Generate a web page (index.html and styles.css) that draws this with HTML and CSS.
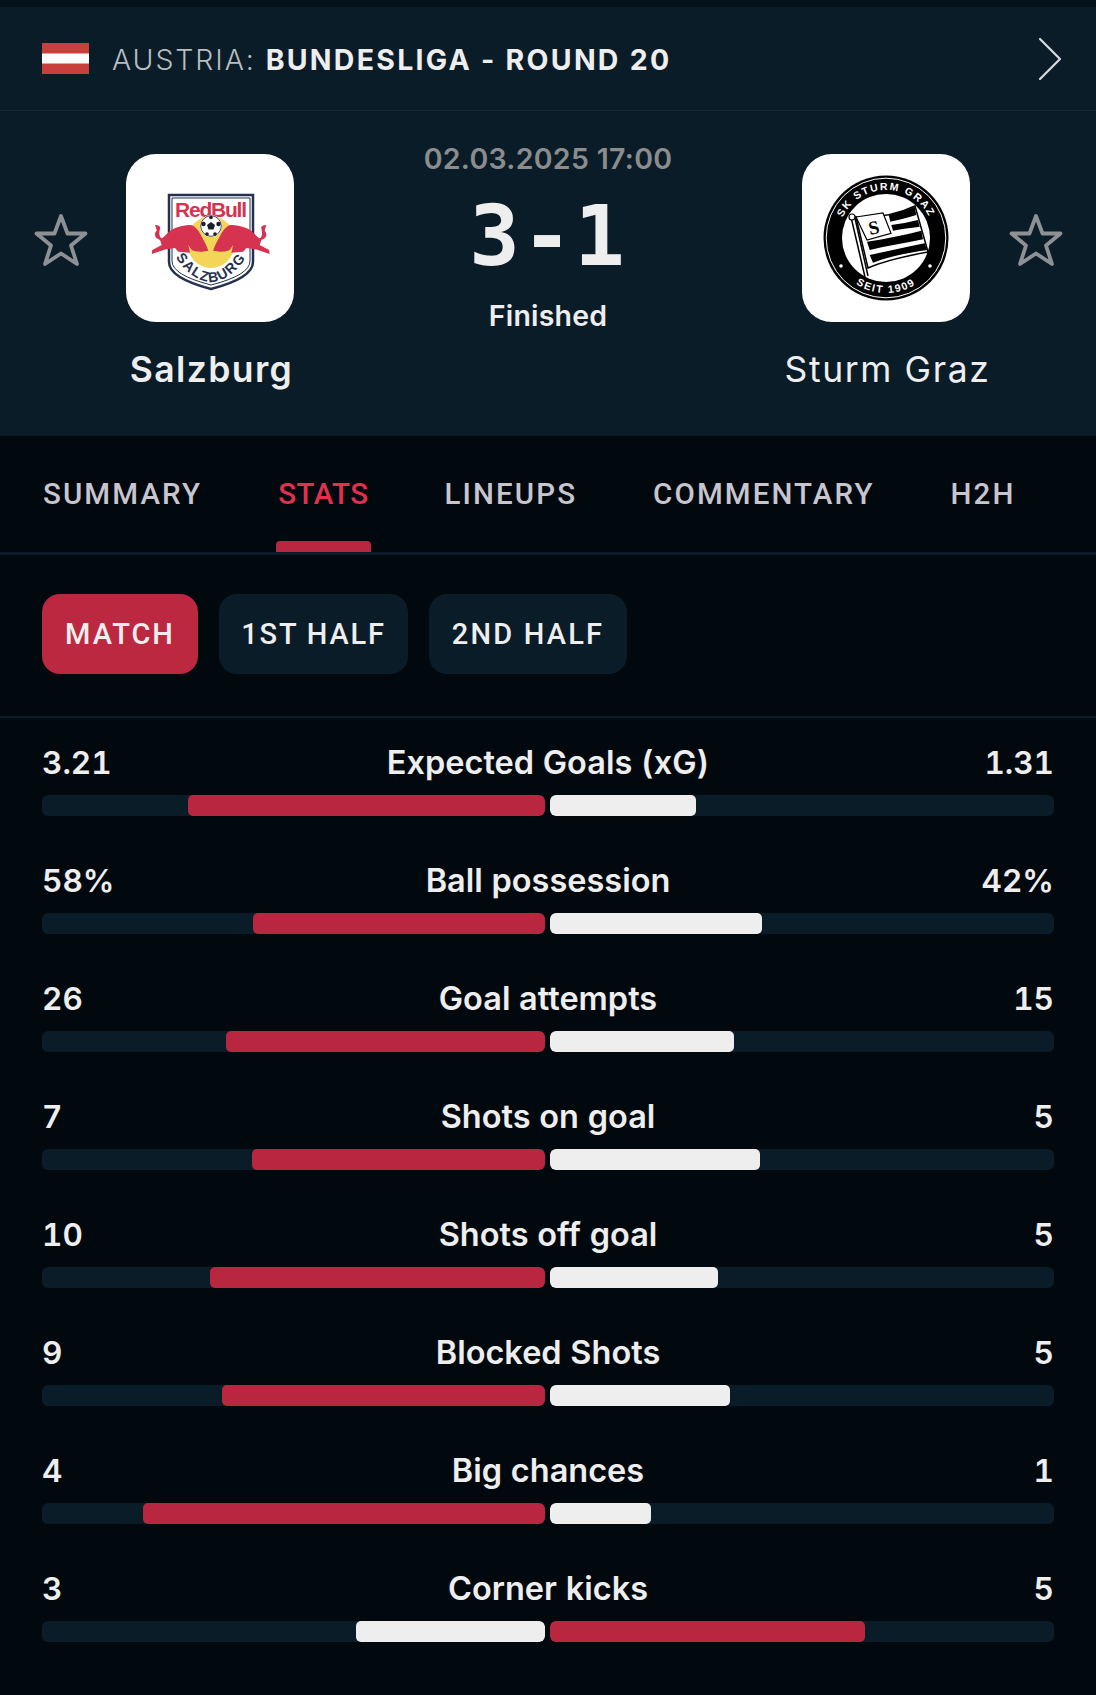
FILE: index.html
```html
<!DOCTYPE html>
<html lang="en">
<head>
<meta charset="utf-8">
<title>Salzburg - Sturm Graz</title>
<link rel="stylesheet" href="styles.css">
</head>
<body>
<div class="strip"></div>
<header class="league">
  <svg class="flag" viewBox="0 0 47 31"><rect width="47" height="31" fill="#c8403c"/><rect y="10.5" width="47" height="10" fill="#fff"/></svg>
  <div class="league-name"><span class="country">AUSTRIA:</span> <strong>BUNDESLIGA - ROUND 20</strong></div>
  <svg class="chevron" viewBox="0 0 24 44"><path d="M2 2 L22 22 L2 42" fill="none" stroke="#d8dcde" stroke-width="2.2" stroke-linecap="round" stroke-linejoin="round"/></svg>
</header>
<section class="match">
  <svg class="star" viewBox="0 0 54 54"><path d="M27 3 L33.500 20.500 L51.500 20.500 L37 32.500 L43 51 L27 40.500 L11 51 L17 32.500 L2.500 20.500 L20.500 20.500 Z" fill="none" stroke="#8e9193" stroke-width="3.800" stroke-linejoin="round"/></svg>
  <div class="team team-home">
    <div class="logo">
      <svg viewBox="0 0 168 168" width="168" height="168">
        <defs>
          <path id="salzArc" d="M50 104 Q85 152 120 104"/>
          <path id="bull" d="M29 71 C32 71 35 72 34 75 C33 78 33 82 35 84 C37 85 39 81 44 77 C48 74 52 73 56 72 C60 71 62 71 64 71 C67 71 68 72 69 73.300 C72 76 74 79 75.700 82.700 C78 87 81 92 82.300 96.700 L75.700 97.700 C72 98 68 97 65.700 96 L62.300 91 L64 98.700 L52.300 97.700 L49 94 L39 95.500 L25.700 100 L26.300 96 L35.700 91 L34 86 C31 85 29 83 29 81 C29 78 30 78 30.700 76 Z"/>
        </defs>
        <path d="M43 41 H127 V108 Q127 124 85 135 Q43 124 43 108 Z" fill="#fff" stroke="#24324f" stroke-width="2.500"/>
        <path d="M46 44 H124 V107 Q124 121 85 131 Q46 121 46 107 Z" fill="none" stroke="#24324f" stroke-width="1"/>
        <ellipse cx="85" cy="88" rx="24" ry="26" fill="#f3d558"/>
        <text x="85" y="63" class="rb-text" text-anchor="middle" textLength="72">RedBull</text>
        <circle cx="85" cy="72" r="11" fill="#fff"/>
        <circle cx="85" cy="72" r="10.300" fill="none" stroke="#1a1d2a" stroke-width="0.800"/>
        <path d="M85 68 L89 71 L87.500 75.500 H82.500 L81 71 Z" fill="#1a1d2a"/>
        <circle cx="77.500" cy="70" r="2.200" fill="#1a1d2a"/><circle cx="92.500" cy="70" r="2.200" fill="#1a1d2a"/>
        <circle cx="81" cy="80" r="1.800" fill="#1a1d2a"/><circle cx="89" cy="80" r="1.800" fill="#1a1d2a"/><circle cx="85" cy="63.500" r="1.800" fill="#1a1d2a"/>
        <use href="#bull" fill="#d5334f"/>
        <use href="#bull" fill="#d5334f" transform="translate(169.400 0) scale(-1 1)"/>
        <text class="salz-text"><textPath href="#salzArc" startOffset="50%" text-anchor="middle">SALZBURG</textPath></text>
      </svg>
    </div>
    <div class="team-name strong">Salzburg</div>
  </div>
  <div class="center">
    <div class="date">02.03.2025 17:00</div>
    <div class="score">3-1</div>
    <div class="status">Finished</div>
  </div>
  <div class="team team-away">
    <div class="logo">
      <svg viewBox="0 0 168 168" width="168" height="168">
        <defs>
          <path id="sturmTop" d="M36 84 A48 48 0 0 1 132 84"/>
          <path id="sturmBottom" d="M29 84 A55 55 0 0 0 139 84"/>
        </defs>
        <circle cx="84" cy="84" r="62.500" fill="#000"/>
        <circle cx="84" cy="84" r="59.800" fill="none" stroke="#fff" stroke-width="1"/>
        <circle cx="84" cy="84" r="44" fill="#fff"/>
        <text class="sturm-text"><textPath href="#sturmTop" startOffset="50%" text-anchor="middle">SK STURM GRAZ</textPath></text>
        <text class="sturm-text"><textPath href="#sturmBottom" startOffset="50%" text-anchor="middle">SEIT 1909</textPath></text>
        <circle cx="39" cy="112" r="1.800" fill="#fff"/><circle cx="128" cy="112" r="1.800" fill="#fff"/>
        <path d="M54 63 C72 64 92 62 113 52 L126 98 C104 102 84 106 66 114 Z" fill="#fff" stroke="#000" stroke-width="1.500"/>
        <path d="M86.700 61 C96 59 104 56 112.700 52.700 L114.300 61 C105 64 97 66 88.300 67.700 Z M89.300 71 C98 70 107 68 116 66 L117.700 72.700 C108 74 100 75 91 76.700 Z M65 87.700 C84 85 102 81 119.300 76.700 L121 85.300 C103 89 85 92 67.700 96 Z M67.700 101 C86 97 105 93 122.700 89.300 L125 96 C106 99 88 102 71 108.700 Z" fill="#000"/>
        <path d="M54 63 L81 59 L89 79.300 L65 86 Z" fill="#fff" stroke="#000" stroke-width="1.200"/>
        <text x="72" y="80" class="flag-s" transform="rotate(-12 72 74)">S</text>
        <path d="M49 63 L63 123 M52.500 62 L66 122" stroke="#000" stroke-width="1.500" fill="none"/>
        <circle cx="50" cy="63" r="3" fill="#fff" stroke="#000" stroke-width="1.200"/>
      </svg>
    </div>
    <div class="team-name">Sturm Graz</div>
  </div>
  <svg class="star star-away" viewBox="0 0 54 54"><path d="M27 3 L33.500 20.500 L51.500 20.500 L37 32.500 L43 51 L27 40.500 L11 51 L17 32.500 L2.500 20.500 L20.500 20.500 Z" fill="none" stroke="#8e9193" stroke-width="3.800" stroke-linejoin="round"/></svg>
</section>
<nav class="tabs">
  <div class="tab">SUMMARY</div>
  <div class="tab active">STATS</div>
  <div class="tab">LINEUPS</div>
  <div class="tab">COMMENTARY</div>
  <div class="tab">H2H</div>
</nav>
<div class="periods">
  <div class="pill pill-active">MATCH</div>
  <div class="pill pill-first">1ST HALF</div>
  <div class="pill pill-second">2ND HALF</div>
</div>
<main class="stats">
  <div class="stat">
    <div class="stat-head"><span>3.21</span><span class="stat-label">Expected Goals (xG)</span><span class="away-value">1.31</span></div>
    <div class="bars"><div class="track left"><div class="fill red" style="width:71%"></div></div><div class="track"><div class="fill white" style="width:29%"></div></div></div>
  </div>
  <div class="stat">
    <div class="stat-head"><span>58%</span><span class="stat-label">Ball possession</span><span class="away-value">42%</span></div>
    <div class="bars"><div class="track left"><div class="fill red" style="width:58%"></div></div><div class="track"><div class="fill white" style="width:42%"></div></div></div>
  </div>
  <div class="stat">
    <div class="stat-head"><span>26</span><span class="stat-label">Goal attempts</span><span class="away-value">15</span></div>
    <div class="bars"><div class="track left"><div class="fill red" style="width:63.4%"></div></div><div class="track"><div class="fill white" style="width:36.6%"></div></div></div>
  </div>
  <div class="stat">
    <div class="stat-head"><span>7</span><span class="stat-label">Shots on goal</span><span class="away-value">5</span></div>
    <div class="bars"><div class="track left"><div class="fill red" style="width:58.3%"></div></div><div class="track"><div class="fill white" style="width:41.7%"></div></div></div>
  </div>
  <div class="stat">
    <div class="stat-head"><span>10</span><span class="stat-label">Shots off goal</span><span class="away-value">5</span></div>
    <div class="bars"><div class="track left"><div class="fill red" style="width:66.7%"></div></div><div class="track"><div class="fill white" style="width:33.3%"></div></div></div>
  </div>
  <div class="stat">
    <div class="stat-head"><span>9</span><span class="stat-label">Blocked Shots</span><span class="away-value">5</span></div>
    <div class="bars"><div class="track left"><div class="fill red" style="width:64.3%"></div></div><div class="track"><div class="fill white" style="width:35.7%"></div></div></div>
  </div>
  <div class="stat">
    <div class="stat-head"><span>4</span><span class="stat-label">Big chances</span><span class="away-value">1</span></div>
    <div class="bars"><div class="track left"><div class="fill red" style="width:80%"></div></div><div class="track"><div class="fill white" style="width:20%"></div></div></div>
  </div>
  <div class="stat">
    <div class="stat-head"><span>3</span><span class="stat-label">Corner kicks</span><span class="away-value">5</span></div>
    <div class="bars"><div class="track left"><div class="fill white" style="width:37.5%"></div></div><div class="track"><div class="fill red" style="width:62.5%"></div></div></div>
  </div>
</main>
</body>
</html>
```
FILE: styles.css
```css
* { box-sizing: border-box; }
html, body { margin: 0; padding: 0; }
body {
  width: 1096px;
  height: 1695px;
  overflow: hidden;
  background: #02090e;
  color: #eeeeef;
  font-family: Inter, "Liberation Sans", sans-serif;
}
.strip { height: 7px; background: #03121b; }

.league {
  height: 104px;
  padding: 0 34px 0 42px;
  display: flex;
  align-items: center;
  background: #0a1c28;
  border-bottom: 1px solid #16292f;
}
.flag { width: 47px; height: 31px; margin-right: 23px; flex: none; }
.league-name { flex: 1; padding-top: 2px; font-size: 28.500px; letter-spacing: 1.900px; white-space: nowrap; }
.country { font-weight: 300; color: #b9bdbf; }
.league-name strong { font-weight: 700; color: #eeeeef; letter-spacing: 2.250px; }
.chevron { width: 24px; height: 44px; flex: none; }

.match {
  height: 325px;
  background: #0a1c28;
  display: flex;
  align-items: flex-start;
  padding: 43px 33px 0 34px;
}
.star { width: 54px; height: 54px; margin-top: 59px; flex: none; }
.star-away { margin-left: 21px; }
.team { width: 204px; display: flex; flex-direction: column; align-items: center; flex: none; }
.team-home { margin-left: 20px; }
.team-away { margin-left: 86px; }
.logo { width: 168px; height: 168px; border-radius: 30px; background: #fff; }
.logo svg { display: block; }
.team-name { margin-top: 26px; margin-left: 3px; font-size: 35.500px; line-height: 44px; font-weight: 400; letter-spacing: 1.600px; white-space: nowrap; }
.team-name.strong { font-weight: 600; letter-spacing: 1.400px; }
.center { width: 300px; flex: none; margin-left: 86px; display: flex; flex-direction: column; align-items: center; margin-top: -15px; }
.date { font-size: 28.500px; line-height: 40px; font-weight: 600; letter-spacing: 0.300px; color: #8c8c8c; white-space: nowrap; }
.score { margin-top: 9px; font-family: "DejaVu Sans Mono", monospace; font-weight: 700; font-size: 84px; line-height: 96px; letter-spacing: 2px; }
.status { margin-top: 14px; font-size: 28.500px; line-height: 36px; font-weight: 600; letter-spacing: 0.200px; }

.tabs {
  height: 119px;
  padding: 0 0 0 41px;
  display: flex;
  gap: 72px;
  border-bottom: 3px solid #0b1c28;
}
.tab {
  padding: 0 2px;
  font-family: Roboto, sans-serif;
  font-size: 29.500px;
  font-weight: 500;
  letter-spacing: 2.100px;
  line-height: 116px;
  color: #c8c5cf;
  white-space: nowrap;
  position: relative;
}
.tab.active { color: #e2304f; letter-spacing: 0.500px; }
.tab.active::after {
  content: "";
  position: absolute;
  left: 0;
  right: 0;
  bottom: 0;
  height: 11px;
  background: #b8273f;
  border-radius: 4px 4px 0 0;
}

.periods {
  height: 163px;
  padding: 39px 42px 0;
  display: flex;
  gap: 21px;
  border-bottom: 2px solid #0b1c28;
}
.pill {
  width: 156px;
  height: 80px;
  display: flex;
  align-items: center;
  justify-content: center;
  border-radius: 18px;
  background: #0a1c28;
  font-family: Roboto, sans-serif;
  font-size: 29px;
  font-weight: 500;
  letter-spacing: 2px;
  color: #eeeeef;
  white-space: nowrap;
}
.pill-active { background: #bb2840; }
.pill-first { width: 189px; letter-spacing: 1.800px; }
.pill-second { width: 198px; letter-spacing: 2.200px; }

.stats { padding: 18px 42px 0; display: flex; flex-direction: column; gap: 38px; }
.stat-head {
  height: 52px;
  display: grid;
  grid-template-columns: 1fr auto 1fr;
  align-items: center;
  font-size: 31.500px;
  font-weight: 600;
  font-variant-numeric: tabular-nums;
  white-space: nowrap;
}
.stat-label { font-size: 32.500px; }
.away-value { text-align: right; }
.bars { height: 21px; margin-top: 7px; display: flex; gap: 5px; }
.track { flex: 1; background: #0a1c28; border-radius: 6px; display: flex; overflow: hidden; }
.track.left { flex: 0 0 503px; justify-content: flex-end; }
.fill { height: 100%; border-radius: 5px; }
.red { background: #b8273f; }
.white { background: #eeeeef; }

.rb-text { font-family: "Liberation Sans", sans-serif; font-weight: 700; font-size: 21px; fill: #d5334f; }
.salz-text { font-family: "Liberation Sans Narrow", "Liberation Sans", sans-serif; font-weight: 700; font-size: 14px; letter-spacing: 1.500px; fill: #24324f; }
.sturm-text { font-family: "Liberation Sans", sans-serif; font-weight: 700; font-size: 10.500px; letter-spacing: 1.600px; fill: #fff; }
.flag-s { font-family: "Liberation Serif", serif; font-weight: 700; font-size: 19px; fill: #000; text-anchor: middle; }
```
